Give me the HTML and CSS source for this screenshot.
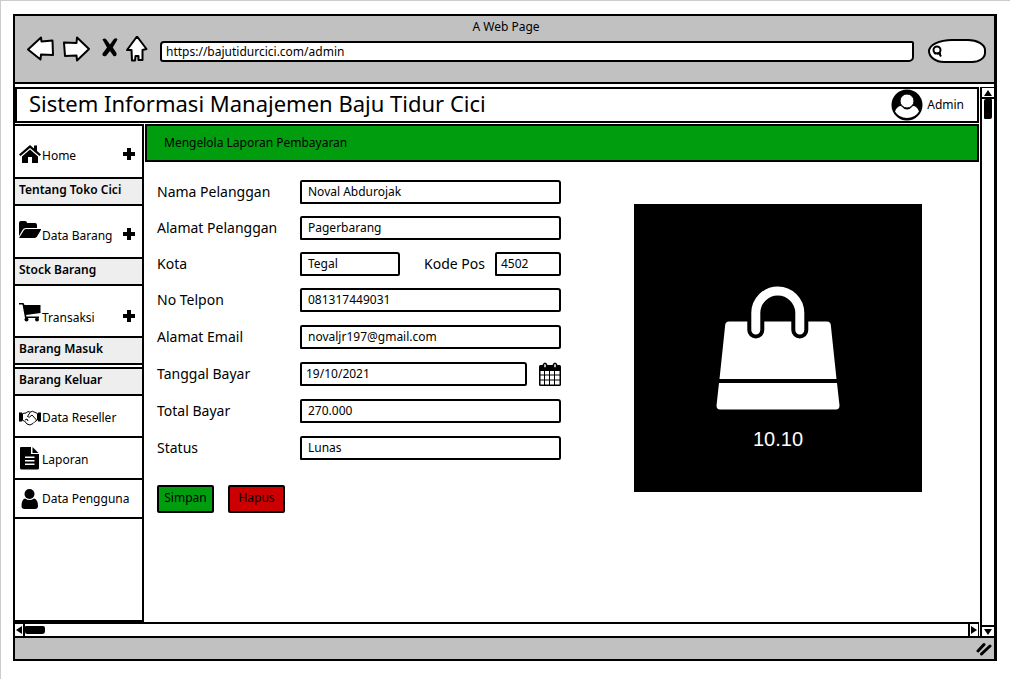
FILE: index.html
```html
<!DOCTYPE html>
<html lang="id">
<head>
<meta charset="utf-8">
<title>Sistem Informasi Manajemen Baju Tidur Cici</title>
<link rel="stylesheet" href="styles.css">
</head>
<body>
<div class="window">
  <div class="toolbar">
    <div class="window-title">A Web Page</div>
    <div class="toolbar-row">
      <div class="nav-buttons">
        <button class="icon-button" type="button" aria-label="Kembali"><svg class="outline" width="32" height="30" viewBox="26 36 32 30"><path d="M28 49.500 41 37.500 41.500 41.500 52.500 40.500 53 55 41 54.500 40.500 59.500Z"/></svg></button>
        <button class="icon-button" type="button" aria-label="Maju"><svg class="outline" width="32" height="30" viewBox="62 36 32 30"><path d="M64 42.500 76.500 43 77 37.500 89 49 77 60.500 76.500 55.500 65 56Z"/></svg></button>
        <button class="icon-button" type="button" aria-label="Berhenti"><svg width="22" height="30" viewBox="98 36 22 30"><path d="M102.500 39.500Q105 37 107.500 41L110 44.500 113.500 39.500Q116 37 117.500 39.500L112.800 47.500 116.500 53Q117 57 113.500 56L110 51 106 56Q102 57 102.500 53.500L107 47.500Z"/></svg></button>
        <button class="icon-button" type="button" aria-label="Beranda"><svg class="outline" width="26" height="30" viewBox="124 36 26 30"><path d="M137 36.500 146.500 49 142.500 50 142.500 60 138.500 60 138.500 56 135.500 56 135 60.500 132 60.500 131.500 50 127 50Z"/></svg></button>
      </div>
      <input class="address" type="text" aria-label="Alamat situs" value="https://bajutidurcici.com/admin">
      <label class="search"><svg width="12" height="14" viewBox="0 0 12 14"><circle cx="5" cy="6" r="3.500"/><path d="M4 9.500 2 9M7 9 9 12.500M5 9.500H9"/></svg><input class="search-input" type="text" aria-label="Cari"></label>
    </div>
  </div>

  <div class="viewport">
    <div class="page">
      <header class="header">
        <h1 class="title">Sistem Informasi Manajemen Baju Tidur Cici</h1>
        <a class="account" href="#admin"><svg width="32" height="32" viewBox="0 0 32 32"><circle cx="16" cy="16" r="15.500"/><path fill="#fff" d="M4 22.500Q6 17 10 17 16 24 22 17 26 17 28 22.500 24 29 16 29 8 29 4 22.500Z"/><circle cx="16" cy="12" r="7" fill="#fff" stroke="#000"/></svg>Admin</a>
      </header>
      <div class="columns">
        <nav class="sidebar">
          <div class="item item-tall"><a class="item-link" href="#home"><svg class="lifted" width="22" height="20" viewBox="0 0 22 20"><path d="M11 1 0 10.500 1.500 12 11 4 20.500 12 22 10.500 18 7V1.500H15V4.500Z"/><path d="M11 5.500 3 12.500V19H9V13H13V19H19V12.500Z"/></svg>Home</a><button class="plus" type="button" aria-label="Buka Home"></button></div>
          <a class="subitem" href="#tentang">Tentang Toko Cici</a>
          <div class="item item-tall"><a class="item-link" href="#barang"><svg class="raised" width="22" height="18" viewBox="0 0 22 18"><path d="M0 15V2Q0 0 2 0H6Q8 0 8 2H16Q18 2 18 4V7H7Q4.500 7 3.500 9Z"/><path d="M0 17 5 9Q6 8 7 8H22.500L18 15.500Q17 17 15 17Z"/></svg>Data Barang</a><button class="plus" type="button" aria-label="Buka Data Barang"></button></div>
          <a class="subitem" href="#stock">Stock Barang</a>
          <div class="item item-mid"><a class="item-link" href="#transaksi"><svg class="raised" width="22" height="19" viewBox="0 0 22 19"><path d="M0 0H4.500L5.500 2H21.500V10L7 12 7.500 13.500H20V15H6L3.500 1.500H0Z"/><circle cx="7.500" cy="16.500" r="2"/><circle cx="18" cy="16.500" r="2"/></svg>Transaksi</a><button class="plus" type="button" aria-label="Buka Transaksi"></button></div>
          <a class="subitem" href="#masuk">Barang Masuk</a>
          <a class="subitem subitem-apart" href="#keluar">Barang Keluar</a>
          <div class="item item-short"><a class="item-link" href="#reseller"><svg width="22" height="16" viewBox="0 0 22 16"><path d="M0 2.500H3V11.500H0ZM19 2.500H22V11.500H19Z"/><path class="line" d="M3.500 3.500 7 3 9 1.500 11 2.200 13.500 1.300 18.500 3.500V10L16 11.500 14 13.500 11 15 8 14 5.500 11 3.500 10.500ZM11 2.500 8.500 6.500Q10 8.500 13 5L17.500 10M6 10 8 9 9 11"/></svg>Data Reseller</a></div>
          <div class="item item-short"><a class="item-link" href="#laporan"><svg class="lifted" width="22" height="24" viewBox="0 0 22 24"><path fill-rule="evenodd" d="M1 2Q1 1 2 1H12V8H20V22Q20 23.500 18.500 23.500H2.500Q1 23.500 1 22ZM6 10.500V12H15.500V10.500ZM6 14V15.500H15.500V14ZM6 17.500V19H15.500V17.500Z"/><path d="M13.500 1 19.500 7H13.500Z"/></svg>Laporan</a></div>
          <div class="item item-low"><a class="item-link" href="#pengguna"><svg width="22" height="22" viewBox="0 0 22 22"><circle cx="10.500" cy="6" r="5"/><path d="M6 10.500Q10.500 13.500 15 10.500 19 11.500 19 18 19 21 16 21H5.500Q2.500 21 2.500 18 2.500 11.500 6 10.500Z"/></svg>Data Pengguna</a></div>
        </nav>

        <main class="main">
          <h2 class="banner">Mengelola Laporan Pembayaran</h2>
          <div class="content">
            <form class="form">
              <div class="group group-tight">
                <div class="row"><label for="nama">Nama Pelanggan</label><input class="field" id="nama" type="text" value="Noval Abdurojak"></div>
                <div class="row"><label for="alamat">Alamat Pelanggan</label><input class="field" id="alamat" type="text" value="Pagerbarang"></div>
                <div class="row"><label for="kota">Kota</label><div class="pair"><input class="field field-city" id="kota" type="text" value="Tegal"><label for="pos">Kode Pos</label><input class="field field-compact field-post" id="pos" type="text" value="4502"></div></div>
                <div class="row"><label for="telpon">No Telpon</label><input class="field" id="telpon" type="text" value="081317449031"></div>
              </div>
              <div class="group">
                <div class="row"><label for="email">Alamat Email</label><input class="field" id="email" type="text" value="novaljr197@gmail.com"></div>
                <div class="row"><label for="tanggal">Tanggal Bayar</label><div class="pair"><input class="field field-compact field-date" id="tanggal" type="text" value="19/10/2021"><button class="icon-button" type="button" aria-label="Pilih tanggal"><svg width="22" height="24" viewBox="0 0 22 24"><rect y="3" width="22" height="21" rx="1.500"/><path fill="#fff" d="M1.500 9H5V12.500H1.500ZM6 9H10V12.500H6ZM11 9H15V12.500H11ZM16 9H20.500V12.500H16ZM1.500 13.500H5V17.500H1.500ZM6 13.500H10V17.500H6ZM11 13.500H15V17.500H11ZM16 13.500H20.500V17.500H16ZM1.500 18.500H5V22.500H1.500ZM6 18.500H10V22.500H6ZM11 18.500H15V22.500H11ZM16 18.500H20.500V22.500H16Z"/><path fill="#fff" stroke="#000" stroke-width="1.500" d="M4.500 2.500Q6 0 7.500 2.500V5Q6 7.500 4.500 5ZM14.500 2.500Q16 0 17.500 2.500V5Q16 7.500 14.500 5Z"/></svg></button></div></div>
                <div class="row"><label for="total">Total Bayar</label><input class="field" id="total" type="text" value="270.000"></div>
                <div class="row"><label for="status">Status</label><input class="field" id="status" type="text" value="Lunas"></div>
              </div>
              <div class="actions">
                <button class="button save" type="button">Simpan</button>
                <button class="button delete" type="button">Hapus</button>
              </div>
            </form>
            <figure class="promo">
              <svg width="124" height="124" viewBox="716 286 124 124"><path fill="#fff" d="M729 321.500H827Q830.500 321.500 830.800 325L836.500 379H719.500L725.200 325Q725.500 321.500 729 321.500ZM719 383H837L839.500 405.500Q839.500 409.500 836 409.500H720Q716.500 409.500 716.500 405.500Z"/><path class="handle-gap" d="M755.800 330V313A22 22 0 0 1 799.800 313V330"/><path class="handle" d="M755.800 330V313A22 22 0 0 1 799.800 313V330"/></svg>
              <figcaption>10.10</figcaption>
            </figure>
          </div>
        </main>
      </div>
    </div>
    <div class="scroll-y">
      <button class="scroll-button" type="button" aria-label="Gulir ke atas"><svg width="8" height="6" viewBox="0 0 8 6"><path d="M4 0 8 6H0Z"/></svg></button>
      <div class="thumb-y"></div>
      <button class="scroll-button" type="button" aria-label="Gulir ke bawah"><svg width="8" height="6" viewBox="0 0 8 6"><path d="M0 0H8L4 6Z"/></svg></button>
    </div>
    <div class="scroll-x">
      <button class="scroll-button" type="button" aria-label="Gulir ke kiri"><svg width="6" height="8" viewBox="0 0 6 8"><path d="M6 0V8L0 4Z"/></svg></button>
      <div class="thumb-x"></div>
      <button class="scroll-button" type="button" aria-label="Gulir ke kanan"><svg width="6" height="8" viewBox="0 0 6 8"><path d="M0 0 6 4 0 8Z"/></svg></button>
    </div>
  </div>
  <div class="statusbar"><svg width="16" height="14" viewBox="0 0 16 14"><path class="grip" d="M2 9 8 2.500M5.500 12 14 4"/></svg></div>
</div>
</body>
</html>
```
FILE: styles.css
```css
* {
  box-sizing: border-box;
}

body {
  margin: 0;
  min-height: 100vh;
  display: flex;
  padding: 13px 13px 18px 12px;
  border-top: 1px solid #ccc;
  border-left: 1px solid #ccc;
  background: #fff;
  color: #000;
  font-family: "Noto Sans", "Open Sans", sans-serif;
  font-size: 12px;
  line-height: 16px;
}

a {
  color: inherit;
  text-decoration: none;
}

input,
button {
  color: inherit;
  font: inherit;
}

svg {
  display: block;
  flex: none;
}

.window {
  flex: 1;
  display: flex;
  flex-direction: column;
  border: 2px solid #000;
  border-right-width: 3px;
}

.toolbar {
  padding: 2px 8px 16px 11px;
  border-bottom: 2px solid #000;
  background: #c1c1c1;
}

.window-title {
  line-height: 18px;
  text-align: center;
}

.toolbar-row {
  display: flex;
  align-items: center;
}

.nav-buttons {
  display: flex;
  gap: 4px;
  margin-right: 10px;
}

.icon-button {
  padding: 0;
  border: 0;
  background: none;
}

.outline {
  fill: #fff;
  stroke: #000;
  stroke-width: 2;
  stroke-linejoin: round;
}

.address {
  flex: 1;
  min-width: 0;
  height: 21px;
  margin-right: 14px;
  padding: 0 4px;
  border: 2px solid #000;
  border-radius: 4px 2px 5px 3px;
  background: #fff;
}

.search {
  width: 58px;
  height: 24px;
  display: flex;
  align-items: center;
  padding: 0 2px;
  border: 2px solid #000;
  border-radius: 24px 18px 14px 16px / 12px 11px 10px 12px;
  background: #fff;
  fill: none;
  stroke: #000;
  stroke-width: 2;
}

.search-input {
  flex: 1;
  min-width: 0;
  height: 16px;
  padding: 0;
  border: 0;
  background: none;
}

.viewport {
  flex: 1;
  display: grid;
  grid-template-columns: minmax(0, 1fr) 14px;
  grid-template-rows: 1fr 14px;
  column-gap: 1px;
  padding-top: 3px;
}

.page {
  display: flex;
  flex-direction: column;
  gap: 1px;
}

.header {
  display: flex;
  align-items: center;
  justify-content: space-between;
  height: 36px;
  padding: 0 13px 0 12px;
  border: 2px solid #000;
}

.title {
  margin: 0;
  padding-bottom: 4px;
  font-size: 22px;
  font-weight: 400;
  line-height: 28px;
}

.account {
  display: flex;
  align-items: center;
  gap: 4px;
}

.columns {
  flex: 1;
  display: flex;
  gap: 1px;
}

.sidebar {
  width: 129px;
  border: 2px solid #000;
  border-left-width: 0;
}

.item {
  display: flex;
  align-items: center;
  justify-content: space-between;
  padding-right: 7px;
}

.item-tall {
  height: 51px;
  padding-top: 9px;
}

.item-mid {
  height: 50px;
  padding-top: 14px;
}

.item-short {
  height: 42px;
  padding-top: 4px;
  border-bottom: 2px solid #000;
}

.item-low {
  height: 39px;
  border-bottom: 2px solid #000;
}

.item-link {
  display: flex;
  align-items: center;
  gap: 1px;
  padding-left: 4px;
  white-space: nowrap;
}

.lifted {
  margin-bottom: 4px;
}

.raised {
  margin-bottom: 12px;
}

.line {
  fill: #fff;
  stroke: #000;
  stroke-width: 1;
}

.plus {
  width: 12px;
  height: 12px;
  margin-bottom: 5px;
  padding: 0;
  border: 0;
  background:
    linear-gradient(#000, #000) center / 12px 4px no-repeat,
    linear-gradient(#000, #000) center / 4px 12px no-repeat;
}

.subitem {
  display: block;
  height: 29px;
  padding: 3px 4px;
  border-top: 2px solid #000;
  border-bottom: 2px solid #000;
  background: #eee;
  font-weight: 600;
  white-space: nowrap;
}

.subitem-apart {
  margin-top: 2px;
}

.main {
  flex: 1;
  min-width: 0;
}

.banner {
  margin: 0;
  padding: 9px 17px;
  border: 2px solid #000;
  background: #009e0f;
  font-size: 12px;
  font-weight: 400;
}

.content {
  display: flex;
  justify-content: space-between;
  align-items: flex-start;
  gap: 24px;
  padding: 18px 57px 24px 12px;
}

.form {
  flex: 0 1 404px;
  font-size: 14px;
}

.group {
  display: grid;
  gap: 13px;
  margin-bottom: 25px;
}

.group-tight {
  gap: 12px;
  margin-bottom: 13px;
}

.row {
  display: grid;
  grid-template-columns: 143px minmax(0, 1fr);
  align-items: center;
}

.pair {
  display: flex;
  align-items: center;
  justify-content: space-between;
}

.field {
  width: 100%;
  height: 24px;
  padding: 0 6px 1px;
  border: 2px solid #000;
  border-radius: 2px 3px 2px 1px;
  background: #fff;
  font-size: 12px;
}

.field-compact {
  padding: 0 4px 1px;
}

.field-city {
  width: 100px;
}

.field-post {
  width: 66px;
}

.field-date {
  width: 227px;
}

.pair label {
  margin-left: 14px;
}

.actions {
  display: flex;
  gap: 14px;
}

.button {
  width: 57px;
  height: 28px;
  padding: 0 0 2px;
  border: 2px solid #000;
  border-radius: 2px;
  font-size: 12px;
}

.save {
  background: #009e0f;
}

.delete {
  background: #c00;
}

.promo {
  flex: none;
  width: 288px;
  aspect-ratio: 1;
  display: flex;
  flex-direction: column;
  align-items: center;
  margin: 24px 0 0;
  padding-top: 82px;
  background: #000;
  color: #fff;
  font-family: "Liberation Sans", Arial, sans-serif;
  font-size: 20px;
  line-height: 28px;
}

.promo figcaption {
  margin-top: 15px;
}

.handle,
.handle-gap {
  fill: none;
  stroke: #fff;
  stroke-width: 9;
  stroke-linecap: round;
}

.handle-gap {
  stroke: #000;
  stroke-width: 17;
}

.scroll-y {
  grid-column: 2;
  grid-row: 1 / 3;
  display: flex;
  flex-direction: column;
  border-left: 2px solid #000;
  border-top: 1px solid #000;
}

.scroll-button {
  display: grid;
  place-items: center;
  padding: 0;
  border: 0 solid #000;
  background: #fff;
}

.scroll-y .scroll-button {
  height: 11px;
  border-bottom-width: 2px;
}

.scroll-y .scroll-button:last-child {
  border-width: 2px 0 0;
  margin-top: auto;
}

.thumb-y {
  width: 8px;
  height: 20px;
  margin: 0 2px;
  border-radius: 2px 1px 2px 1px;
  background: #000;
}

.scroll-x {
  display: flex;
  align-items: center;
  border: solid #000;
  border-width: 2px 1px 0 0;
}

.scroll-x .scroll-button {
  width: 10px;
  height: 12px;
  border-right-width: 2px;
}

.scroll-x .scroll-button:last-child {
  border-width: 0 0 0 2px;
  margin-left: auto;
}

.thumb-x {
  width: 20px;
  height: 8px;
  border-radius: 1px 2px 3px 2px;
  background: #000;
}

.statusbar {
  display: flex;
  align-items: center;
  justify-content: flex-end;
  height: 23px;
  padding-right: 2px;
  border-top: 2px solid #000;
  background: #c1c1c1;
}

.grip {
  fill: none;
  stroke: #000;
  stroke-width: 3;
  stroke-linecap: round;
}
```
